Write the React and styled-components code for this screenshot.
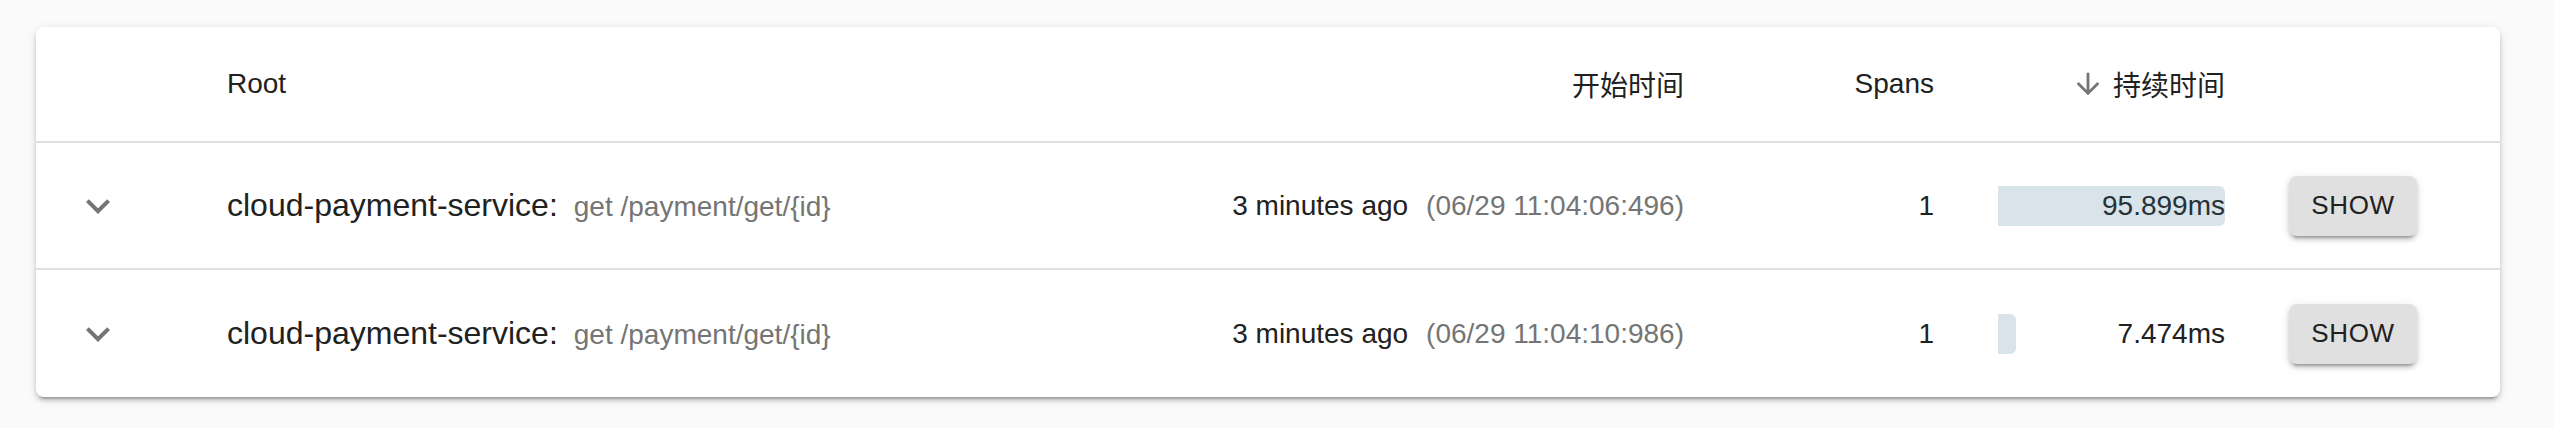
import React from "react";
import styled, { createGlobalStyle } from "styled-components";

const GlobalStyle = createGlobalStyle`
  body {
    margin: 0;
    background: #fafafa;
    font-family: "Liberation Sans", Arial, "Noto Sans CJK SC", sans-serif;
    color: #212121;
  }
`;

const Page = styled.div`
  padding: 27px 54px 30px 36px;
`;

const Card = styled.div`
  width: 2464px;
  background: #fff;
  border-radius: 8px;
  box-shadow: 0 6px 2px -4px rgba(0, 0, 0, 0.2), 0 4px 4px 0 rgba(0, 0, 0, 0.14),
    0 2px 10px 0 rgba(0, 0, 0, 0.12);
  overflow: hidden;
`;

const Row = styled.div`
  display: grid;
  grid-template-columns: 159px 1fr 560px 250px 291px 243px;
  align-items: center;
  height: ${(p) => (p.$head ? "114px" : "125px")};
  border-bottom: ${(p) => (p.$last ? "none" : "2px solid #e0e0e0")};
  font-size: 28px;
  ${(p) => p.$last && "height: 127px;"}
`;

const Cell = styled.div`
  padding: 0 32px;
  display: flex;
  align-items: center;
  justify-content: ${(p) => (p.$right ? "flex-end" : "flex-start")};
  white-space: nowrap;
`;

const ExpandCell = styled.div`
  padding-left: 38px;
  display: flex;
  align-items: center;
`;

const IconBox = styled.svg`
  width: ${(p) => p.$size}px;
  height: ${(p) => p.$size}px;
  fill: #757575;
  flex-shrink: 0;
`;

const SortLabel = styled.span`
  display: inline-flex;
  align-items: center;
  gap: 8px;
`;

const RootLine = styled.div`
  display: flex;
  align-items: baseline;
`;

const Service = styled.span`
  font-size: 32px;
  color: #212121;
`;

const Secondary = styled.span`
  font-size: 28px;
  color: #757575;
  margin-left: 16px;
`;

const StartAgo = styled.span`
  color: #212121;
`;

const StartStamp = styled.span`
  color: #757575;
  margin-left: 18px;
`;

const DurationBox = styled.div`
  position: relative;
  flex: 1;
  height: 40px;
  display: flex;
  align-items: center;
  justify-content: flex-end;
`;

const Bar = styled.div`
  position: absolute;
  left: 0;
  top: 0;
  bottom: 0;
  background: rgba(60, 115, 150, 0.2);
  border-radius: 0 6px 6px 0;
  pointer-events: none;
`;

const ShowButton = styled.button`
  width: 128px;
  height: 60px;
  border: none;
  border-radius: 8px;
  background: #e0e0e0;
  color: #212121;
  font-family: inherit;
  font-size: 26px;
  letter-spacing: 0.6px;
  text-transform: uppercase;
  cursor: pointer;
  box-shadow: 0 6px 2px -4px rgba(0, 0, 0, 0.2), 0 4px 4px 0 rgba(0, 0, 0, 0.14),
    0 2px 10px 0 rgba(0, 0, 0, 0.12);
`;

const ExpandMore = () => (
  <IconBox $size={48} viewBox="0 0 24 24">
    <path d="M16.59 8.59 12 13.17 7.41 8.59 6 10l6 6 6-6z" />
  </IconBox>
);

const ArrowDown = () => (
  <IconBox $size={34} viewBox="0 0 24 24">
    <path d="M20 12l-1.41-1.41L13 16.17V4h-2v12.17l-5.58-5.59L4 12l8 8 8-8z" />
  </IconBox>
);

const traces = [
  {
    service: "cloud-payment-service:",
    endpoint: "get /payment/get/{id}",
    ago: "3 minutes ago",
    stamp: "(06/29 11:04:06:496)",
    spans: 1,
    duration: 95.899,
  },
  {
    service: "cloud-payment-service:",
    endpoint: "get /payment/get/{id}",
    ago: "3 minutes ago",
    stamp: "(06/29 11:04:10:986)",
    spans: 1,
    duration: 7.474,
  },
];

const maxDuration = Math.max(...traces.map((t) => t.duration));

export default function App() {
  return (
    <Page>
      <GlobalStyle />
      <Card>
        <Row $head>
          <div />
          <Cell>Root</Cell>
          <Cell $right>开始时间</Cell>
          <Cell $right>Spans</Cell>
          <Cell $right>
            <SortLabel>
              <ArrowDown />
              持续时间
            </SortLabel>
          </Cell>
          <div />
        </Row>
        {traces.map((t, i) => (
          <Row key={t.stamp} $last={i === traces.length - 1}>
            <ExpandCell>
              <ExpandMore />
            </ExpandCell>
            <Cell>
              <RootLine>
                <Service>{t.service}</Service>
                <Secondary>{t.endpoint}</Secondary>
              </RootLine>
            </Cell>
            <Cell $right>
              <StartAgo>{t.ago}</StartAgo>
              <StartStamp>{t.stamp}</StartStamp>
            </Cell>
            <Cell $right>{t.spans}</Cell>
            <Cell $right>
              <DurationBox>
                {t.duration}ms
                <Bar style={{ width: `${(t.duration / maxDuration) * 100}%` }} />
              </DurationBox>
            </Cell>
            <Cell>
              <ShowButton>Show</ShowButton>
            </Cell>
          </Row>
        ))}
      </Card>
    </Page>
  );
}
